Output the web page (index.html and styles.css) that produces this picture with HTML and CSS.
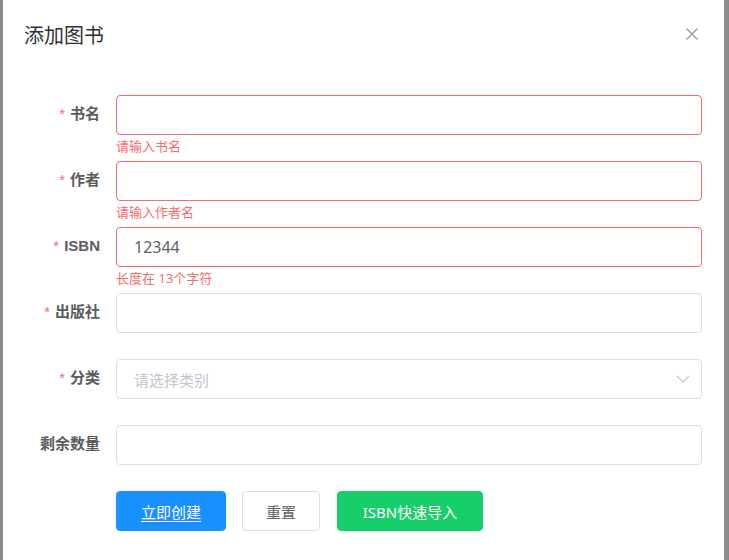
FILE: index.html
```html
<!DOCTYPE html>
<html lang="zh">
<head>
<meta charset="utf-8">
<title>添加图书</title>
<link rel="stylesheet" href="styles.css">
</head>
<body>
<div class="page">
  <div class="dialog">
    <div class="dialog-header">
      <span class="dialog-title">添加图书</span>
      <button class="close-btn" aria-label="关闭">
        <svg width="12" height="12" viewBox="0 0 12 12"><path d="M0.5 0.5 L11.5 11.5 M11.5 0.5 L0.5 11.5" stroke="#909399" stroke-width="1.2" fill="none"/></svg>
      </button>
    </div>
    <div class="dialog-body">
      <form class="form">
        <div class="form-item has-error">
          <label class="form-label"><span class="req">*</span>书名</label>
          <div class="form-control">
            <input class="input" type="text" value="">
            <div class="error">请输入书名</div>
          </div>
        </div>
        <div class="form-item has-error">
          <label class="form-label"><span class="req">*</span>作者</label>
          <div class="form-control">
            <input class="input" type="text" value="">
            <div class="error">请输入作者名</div>
          </div>
        </div>
        <div class="form-item has-error">
          <label class="form-label"><span class="req">*</span>ISBN</label>
          <div class="form-control">
            <input class="input" type="text" value="12344">
            <div class="error">长度在 13个字符</div>
          </div>
        </div>
        <div class="form-item">
          <label class="form-label"><span class="req">*</span>出版社</label>
          <div class="form-control">
            <input class="input" type="text" value="">
          </div>
        </div>
        <div class="form-item">
          <label class="form-label"><span class="req">*</span>分类</label>
          <div class="form-control">
            <div class="select">
              <span class="placeholder">请选择类别</span>
              <svg class="arrow" width="14" height="8" viewBox="0 0 14 8"><path d="M1 1 L7 7 L13 1" stroke="#C0C4CC" stroke-width="1.2" fill="none"/></svg>
            </div>
          </div>
        </div>
        <div class="form-item">
          <label class="form-label">剩余数量</label>
          <div class="form-control">
            <input class="input" type="text" value="">
          </div>
        </div>
        <div class="form-actions">
          <button type="button" class="btn btn-primary"><span class="u">立即创建</span></button>
          <button type="button" class="btn btn-default">重置</button>
          <button type="button" class="btn btn-success">ISBN快速导入</button>
        </div>
      </form>
    </div>
  </div>
</div>
</body>
</html>
```

FILE: styles.css
```css
* { box-sizing: border-box; }
html, body { margin: 0; padding: 0; height: 100%; }
body {
  background: #8a8a8a;
  font-family: "Noto Sans", "Noto Sans CJK SC", sans-serif;
  overflow: hidden;
}
.page {
  height: 560px;
  padding-left: 3px;
}
.dialog {
  width: 721px;
  height: 100%;
  background: #ffffff;
}
.dialog-header {
  display: flex;
  justify-content: space-between;
  align-items: center;
  padding: 22px 26px 10px 21px;
}
.dialog-title {
  font-size: 20px;
  line-height: 26px;
  color: #303133;
  font-family: "Noto Sans CJK SC", sans-serif;
}
.close-btn {
  border: 0;
  background: none;
  padding: 0;
  width: 12px;
  height: 12px;
  display: flex;
  margin-top: -2px;
}
.dialog-body {
  padding: 37px 22px 0 21px;
}
.form-item {
  display: flex;
  margin-bottom: 26px;
}
.form-item.has-error { margin-bottom: 0; }
.form-label {
  width: 92px;
  flex: none;
  text-align: right;
  padding-right: 16px;
  font-size: 15px;
  font-weight: bold;
  line-height: 38px;
  color: #5a5c61;
  font-family: "Liberation Sans", "Noto Sans CJK SC", sans-serif;
}
.req {
  color: #F56C6C;
  margin-right: 5px;
  font-weight: normal;
}
.form-control { flex: 1; }
.input {
  display: block;
  width: 100%;
  height: 40px;
  border: 1px solid #DCDFE6;
  border-radius: 4px;
  padding: 0 17px;
  font-size: 16px;
  color: #606266;
  font-family: "Noto Sans", "Noto Sans CJK SC", sans-serif;
  outline: none;
  background: #fff;
}
.has-error .input { border-color: #F56C6C; }
.error {
  color: #F56C6C;
  font-size: 13px;
  line-height: 22px;
  margin-bottom: 4px;
  font-family: "Noto Sans", "Noto Sans CJK SC", sans-serif;
}
.select {
  height: 40px;
  border: 1px solid #DCDFE6;
  border-radius: 4px;
  padding: 0 11px 0 17px;
  display: flex;
  align-items: center;
  justify-content: space-between;
}
.placeholder {
  color: #C0C4CC;
  font-size: 15px;
  font-family: "Noto Sans CJK SC", sans-serif;
}
.form-actions {
  display: flex;
  gap: 16px;
  padding-left: 92px;
}
.btn {
  height: 40px;
  border-radius: 4px;
  font-size: 15px;
  padding: 0;
  white-space: nowrap;
  font-family: "Noto Sans", "Noto Sans CJK SC", sans-serif;
  border: 1px solid transparent;
  cursor: pointer;
}
.btn-primary { background: #1890FF; border-color: #1890FF; color: #fff; width: 110px; }
.btn-primary .u { text-decoration: underline; text-underline-offset: 3px; }
.btn-default { background: #fff; border-color: #DCDFE6; color: #606266; width: 78px; }
.btn-success { background: #17CE6A; border-color: #17CE6A; color: #fff; width: 146px; margin-left: 1px; }
```
